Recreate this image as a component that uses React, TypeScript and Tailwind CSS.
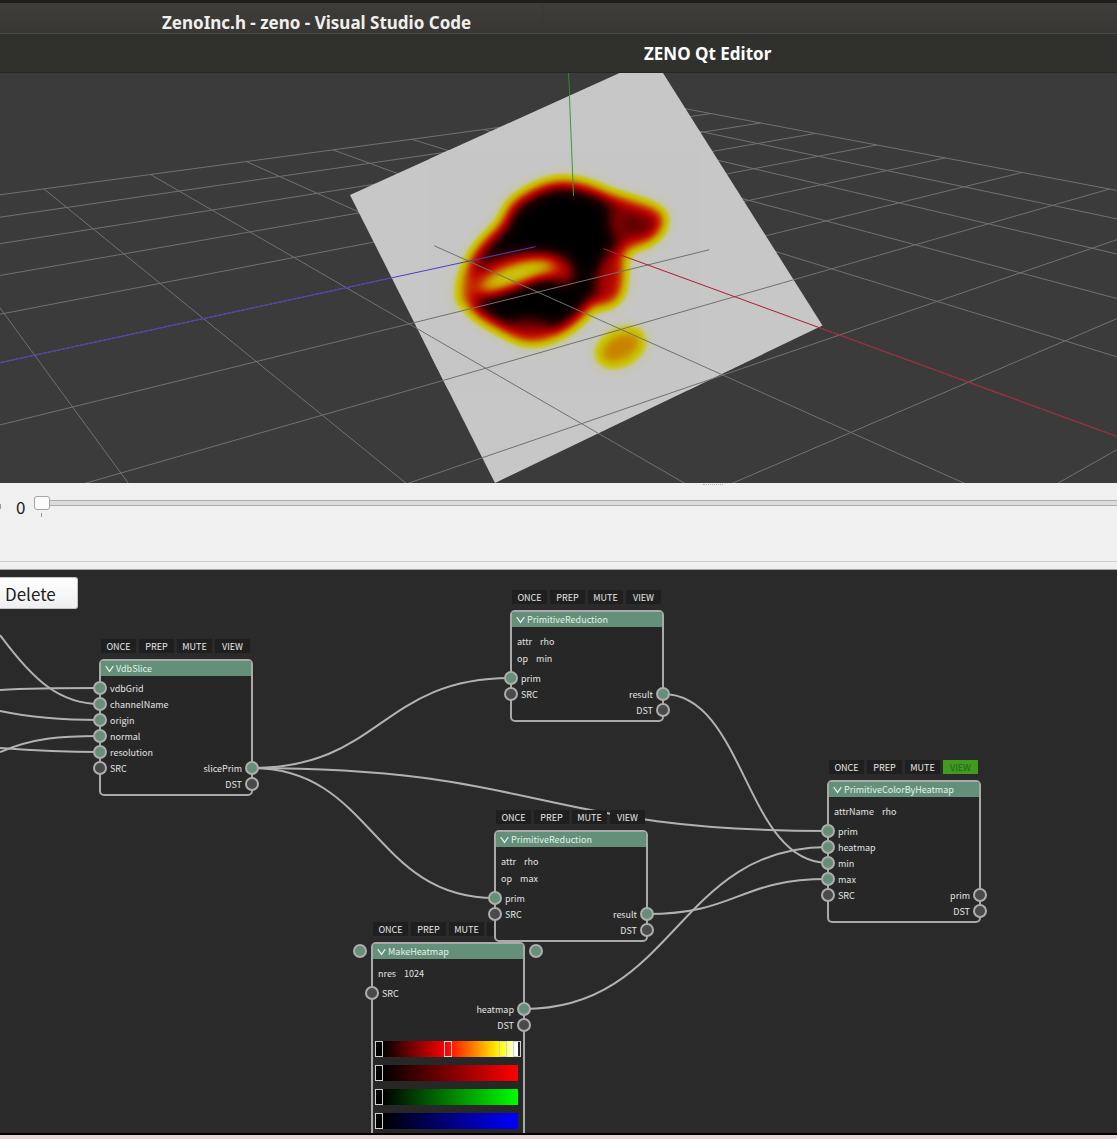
import React from "react";

const UI_FONT = "font-['Noto_Sans_CJK_SC','Noto_Sans',sans-serif]";

/* ---------- 3D viewport ---------- */

type Point = [number, number];

const project = (a: number, b: number): Point => {
  const w = 1 - 0.0789 * a - 0.06686 * b;
  return [
    (574.6 + 22.05 * a - 137.31 * b) / w,
    (238.2 + 5.84 * a + 5.5 * b) / w,
  ];
};

const GRID = [-5, -4, -3, -2, -1, 0, 1, 2, 3, 4, 5];

function Segment({ from, to, color = "#717171" }: { from: Point; to: Point; color?: string }) {
  return <line x1={from[0]} y1={from[1]} x2={to[0]} y2={to[1]} stroke={color} strokeWidth="1" />;
}

function Viewport() {
  return (
    <section aria-label="3D viewport" className="h-[410px] w-full overflow-hidden bg-[#3b3b3b]">
      <svg
        viewBox="0 73 1117 410"
        preserveAspectRatio="xMidYMid slice"
        className="block h-full w-full"
        role="img"
        aria-label="Heatmap slice over a ground grid"
      >
        <defs>
          <clipPath id="plane">
            <polygon points="350,195 619.5,73 663,73 822.5,325.5 495,483" />
          </clipPath>
          <filter
            id="heat"
            filterUnits="userSpaceOnUse"
            x="430"
            y="150"
            width="270"
            height="240"
            colorInterpolationFilters="sRGB"
          >
            <feGaussianBlur stdDeviation="7" />
            <feComponentTransfer>
              <feFuncR type="table" tableValues="0 0.12 0.36 0.6 0.76 0.78 0.79 0.79 0.79 0.78 0.78" />
              <feFuncG type="table" tableValues="0 0 0 0 0.06 0.26 0.5 0.7 0.78 0.78 0.78" />
              <feFuncB type="table" tableValues="0 0 0 0 0 0 0 0 0.08 0.68 0.78" />
            </feComponentTransfer>
          </filter>
        </defs>

        {GRID.map((n) => (
          <g key={n}>
            <Segment from={project(n, -5)} to={project(n, 5)} />
            <Segment from={project(-5, n)} to={project(5, n)} />
          </g>
        ))}
        <line x1="568.5" y1="73" x2="570" y2="100" stroke="#2f8a2f" />

        <polygon points="350,195 619.5,73 663,73 822.5,325.5 495,483" fill="#c7c7c7" />

        <g clipPath="url(#plane)">
          <g filter="url(#heat)">
            <rect x="400" y="120" width="330" height="300" fill="#fff" />
            <path
              d="M563,183 C578,183 594,189 606,195 C624,202 648,206 659,214 C666,221 657,234 648,239
                 C638,244 624,245 620,251 C620,266 622,280 617,292 C612,304 601,304 591,302
                 C584,315 570,328 552,335 C536,341 524,341 514,334 C502,327 484,321 474,310
                 C466,300 464,290 467,274 C472,256 484,243 498,230 C508,222 506,212 514,204
                 C526,194 546,183 563,183 Z"
              fill="#000"
            />
            <path
              d="M563,183 C578,183 594,189 606,195 C624,202 648,206 659,214 C666,221 657,234 648,239
                 C638,244 624,245 620,251 C620,266 622,280 617,292 C612,304 601,304 591,302
                 C584,315 570,328 552,335 C536,341 524,341 514,334 C502,327 484,321 474,310
                 C466,300 464,290 467,274 C472,256 484,243 498,230 C508,222 506,212 514,204
                 C526,194 546,183 563,183 Z"
              fill="none"
              stroke="#6a6a6a"
              strokeWidth="10"
            />
            <path d="M606,206 L648,210 L656,220 L636,238 L612,242 Z" fill="#444444" />
            <ellipse cx="632" cy="224" rx="6" ry="6" fill="#181818" />
            <path d="M606,252 L622,250 L622,298 L599,304 L594,280 Z" fill="#585858" />
            <path
              d="M456,306 C458,284 472,270 496,258 C522,250 552,250 568,260 C578,270 576,284 566,284
                 C556,280 546,277 536,280 C516,288 496,298 472,300 Z"
              fill="#606060"
            />
            <path
              d="M478,290 C490,274 530,256 554,264 C558,269 550,271 540,273 C522,280 502,288 484,291 Z"
              fill="#ececec"
            />
            <ellipse cx="463" cy="288" rx="6" ry="16" fill="#909090" />
            <ellipse cx="528" cy="328" rx="24" ry="9" fill="#484848" />
            <ellipse
              cx="620.5"
              cy="347.5"
              rx="27"
              ry="18"
              fill="#9a9a9a"
              transform="rotate(-28 620.5 347.5)"
            />
          </g>
        </g>

        <g clipPath="url(#plane)">
          <Segment from={project(1, 5)} to={project(1, -0.63)} />
          <Segment from={project(2, 5)} to={project(2, -5)} />
          <Segment from={project(3, 5)} to={project(3, -5)} />
          <Segment from={project(-0.57, 1)} to={project(5, 1)} />
          <Segment from={project(-5, 2)} to={project(5, 2)} />
          <line x1="568.5" y1="73" x2="573.5" y2="196" stroke="#3a9a3a" />
        </g>
        <Segment from={project(0, 5)} to={project(0, 0.385)} color="#4a3fc4" />
        <Segment from={project(0.413, 0)} to={project(5, 0)} color="#b01c30" />
      </svg>
    </section>
  );
}

/* ---------- node graph ---------- */

type Row = { in?: string; out?: string };
type Param = { name: string; value: string };

const isPlain = (name: string) => name === "SRC" || name === "DST";

function Knob({ filled }: { filled: boolean }) {
  return (
    <span
      className={
        "block size-[14px] shrink-0 rounded-full border-2 border-[#adadad] " +
        (filled ? "bg-[#64907a]" : "bg-[#4a4a4a]")
      }
    />
  );
}

function PortRow({ row }: { row: Row }) {
  return (
    <li className="-mx-2 flex h-4 items-center justify-between">
      <span className="flex items-center gap-[3px]">
        {row.in && (
          <>
            <Knob filled={!isPlain(row.in)} />
            <span className="pt-[2px]">{row.in}</span>
          </>
        )}
      </span>
      <span className="flex items-center gap-[3px]">
        {row.out && (
          <>
            <span className="pt-[2px]">{row.out}</span>
            <Knob filled={row.out !== "DST" && row.out !== "prim"} />
          </>
        )}
      </span>
    </li>
  );
}

function Node({
  title,
  place,
  params = [],
  rows,
  viewing = false,
  knobs = false,
  children,
}: {
  title: string;
  place: string;
  params?: Param[];
  rows: Row[];
  viewing?: boolean;
  knobs?: boolean;
  children?: React.ReactNode;
}) {
  return (
    <article className={"absolute w-[154px] text-[9px] leading-[14px] text-[#e2e2e2] " + place}>
      <div className="mb-[6px] flex gap-[3px] pl-[2px]">
        {["ONCE", "PREP", "MUTE", "VIEW"].map((label) => (
          <button
            key={label}
            type="button"
            className={
              "h-[14px] w-[35px] text-center leading-[15px] " +
              (viewing && label === "VIEW" ? "bg-[#3f9a1f] text-[#28641a]" : "bg-[#1f1f1f] text-[#e6e6e6]")
            }
          >
            {label}
          </button>
        ))}
      </div>
      <div className="relative rounded-[5px] border-2 border-[#a9a9a9] bg-[#272727]">
        <button
          type="button"
          className="flex h-[15px] w-full items-center gap-[2px] rounded-t-[2px] bg-[#64907a] pl-1 leading-[15px] text-[#e2f0e8]"
        >
          <svg viewBox="0 0 9 8" className="h-2 w-[9px]" aria-hidden="true">
            <path d="M0.7 1.2 L4.5 6.4 L8.3 1.2" fill="none" stroke="#e4f0ea" strokeWidth="1.2" />
          </svg>
          {title}
        </button>
        {knobs && (
          <>
            <span className="absolute -left-5 top-0">
              <Knob filled />
            </span>
            <span className="absolute -right-5 top-0">
              <Knob filled />
            </span>
          </>
        )}
        {params.length > 0 ? (
          <dl className="px-[5px] pb-[3px] pt-[6px]">
            {params.map((p) => (
              <div key={p.name} className="flex h-[17px] items-center gap-2">
                <dt>{p.name}</dt>
                <dd>{p.value}</dd>
              </div>
            ))}
          </dl>
        ) : (
          <div className="h-1" />
        )}
        <ul className="pb-[2px]">
          {rows.map((row, i) => (
            <PortRow key={i} row={row} />
          ))}
        </ul>
        {children}
      </div>
    </article>
  );
}

const RAMPS = [
  {
    name: "Combined",
    paint: "bg-[linear-gradient(90deg,#000_5%,#f00_50%,#ff0_88%,#fff_98%)]",
    stops: ["left-0", "left-[69px]", "left-[124px]", "left-[138px]"],
  },
  { name: "Red", paint: "bg-[linear-gradient(90deg,#000_5%,#f00)]", stops: ["left-0"] },
  { name: "Green", paint: "bg-[linear-gradient(90deg,#000_5%,#0f0)]", stops: ["left-0"] },
  { name: "Blue", paint: "bg-[linear-gradient(90deg,#000_5%,#00f)]", stops: ["left-0"] },
];

function Ramps() {
  return (
    <div className="flex flex-col gap-2 pb-4 pl-[2px] pr-[5px] pt-[6px]">
      {RAMPS.map((ramp) => (
        <div key={ramp.name} className={"relative h-4 " + ramp.paint}>
          {ramp.stops.map((stop) => (
            <button
              key={stop}
              type="button"
              aria-label={ramp.name + " stop"}
              className={"absolute top-0 h-4 w-2 border border-[#d0d0d0] " + stop}
            />
          ))}
        </div>
      ))}
    </div>
  );
}

const WIRES = [
  "M0,120 C33,118 66,118 100,118",
  "M0,65 C34,111 60,134 100,134",
  "M0,141 C33,148 66,150 100,150",
  "M0,182 C33,168 60,166 100,166",
  "M0,178 C40,181 70,182 100,182",
  "M252,198 C381,198 381,108 511,108",
  "M252,198 C540,198 540,261 828,261",
  "M252,198 C373,198 373,328 495,328",
  "M663,124 C745,124 745,293 828,293",
  "M647,344 C738,344 738,309 828,309",
  "M524,439 C676,439 676,277 828,277",
];

function NodeEditor() {
  return (
    <section aria-label="Node editor" className="relative min-h-[563px] flex-1 overflow-hidden bg-[#2a2a2a]">
      <svg className="absolute left-0 top-0 h-[563px] w-[1117px]" viewBox="0 0 1117 563" aria-hidden="true">
        {WIRES.map((d) => (
          <path key={d} d={d} fill="none" stroke="#b2b2b2" strokeWidth="2" />
        ))}
      </svg>
      <Node
        title="VdbSlice"
        place="left-[99px] top-[69px]"
        rows={[
          { in: "vdbGrid" },
          { in: "channelName" },
          { in: "origin" },
          { in: "normal" },
          { in: "resolution" },
          { in: "SRC", out: "slicePrim" },
          { out: "DST" },
        ]}
      />
      <Node
        title="PrimitiveReduction"
        place="left-[510px] top-[20px]"
        params={[
          { name: "attr", value: "rho" },
          { name: "op", value: "min" },
        ]}
        rows={[{ in: "prim" }, { in: "SRC", out: "result" }, { out: "DST" }]}
      />
      <Node
        title="MakeHeatmap"
        place="left-[371px] top-[352px]"
        params={[{ name: "nres", value: "1024" }]}
        rows={[{ in: "SRC" }, { out: "heatmap" }, { out: "DST" }]}
        knobs
      >
        <Ramps />
      </Node>
      <Node
        title="PrimitiveReduction"
        place="left-[494px] top-[240px]"
        params={[
          { name: "attr", value: "rho" },
          { name: "op", value: "max" },
        ]}
        rows={[{ in: "prim" }, { in: "SRC", out: "result" }, { out: "DST" }]}
      />
      <Node
        title="PrimitiveColorByHeatmap"
        place="left-[827px] top-[190px]"
        params={[{ name: "attrName", value: "rho" }]}
        rows={[
          { in: "prim" },
          { in: "heatmap" },
          { in: "min" },
          { in: "max" },
          { in: "SRC", out: "prim" },
          { out: "DST" },
        ]}
        viewing
      />
      <button
        type="button"
        className="absolute left-0 top-[7px] h-8 w-[78px] rounded-r-[3px] border border-l-0 border-[#c4c4c4] bg-linear-to-b from-white to-[#efeff1] pl-[5px] text-left text-[17px] leading-[32px] text-[#1c1c1c]"
      >
        Delete
      </button>
    </section>
  );
}

/* ---------- timeline ---------- */

function Timeline() {
  return (
    <section aria-label="Timeline" className="flex h-[87px] flex-col border-b border-[#a5a5a5] bg-[#f0f0f0]">
      <div className="flex h-[3px] w-full justify-center pl-[308px]">
        <span className="h-[2px] w-5 border-b border-dotted border-[#b5b5b5]" />
      </div>
      <div className="flex flex-1 items-start border-b border-[#cfcfcf]">
        <span className="mt-[18px] h-[5px] w-px bg-[#9a9a9a]" />
        <label htmlFor="frame" className="w-[33px] pl-[15px] pt-[9px] text-[17px] leading-6 text-[#1c1c1c]">
          0
        </label>
        <div className="flex min-w-0 flex-1 flex-col pt-[9px]">
          <input
            id="frame"
            type="range"
            min="0"
            max="100"
            defaultValue="0"
            className="h-[15px] w-full appearance-none bg-transparent [&::-webkit-slider-runnable-track]:h-[6px] [&::-webkit-slider-runnable-track]:border-y [&::-webkit-slider-runnable-track]:border-[#a9adac] [&::-webkit-slider-runnable-track]:bg-[#dcdcdc] [&::-webkit-slider-thumb]:-mt-[5px] [&::-webkit-slider-thumb]:h-[14px] [&::-webkit-slider-thumb]:w-4 [&::-webkit-slider-thumb]:appearance-none [&::-webkit-slider-thumb]:rounded-[3px] [&::-webkit-slider-thumb]:border [&::-webkit-slider-thumb]:border-[#a4a4a4] [&::-webkit-slider-thumb]:bg-[#fbfbfb]"
          />
          <span className="ml-[7px] mt-[3px] h-1 w-px bg-[#9a9a9a]" />
        </div>
      </div>
      <div className="h-[7px]" />
    </section>
  );
}

export default function App() {
  return (
    <main className={"flex min-h-screen w-full flex-col overflow-hidden bg-[#2a2a2a] " + UI_FONT}>
      <header className="font-['Noto_Sans',sans-serif] text-[17px] font-bold text-[#efefec]">
        <div className="flex h-[34px] border-b border-t-[3px] border-b-[#4d4844] border-t-[#1f1e1c] bg-linear-to-b from-[#3e3d3a] to-[#393734]">
          <h1 className="w-[543px] whitespace-nowrap border-r border-[#373633] pl-[162px] leading-[40px]">
            ZenoInc.h - zeno - Visual Studio Code
          </h1>
        </div>
        <div className="h-[39px] border-b border-[#262624] bg-[#30302d] pl-[644px]">
          <h2 className="whitespace-nowrap leading-[39px] text-white">ZENO Qt Editor</h2>
        </div>
      </header>
      <Viewport />
      <Timeline />
      <NodeEditor />
      <footer className="h-[6px] border-t-2 border-black bg-[#e6d6d6]" />
    </main>
  );
}
